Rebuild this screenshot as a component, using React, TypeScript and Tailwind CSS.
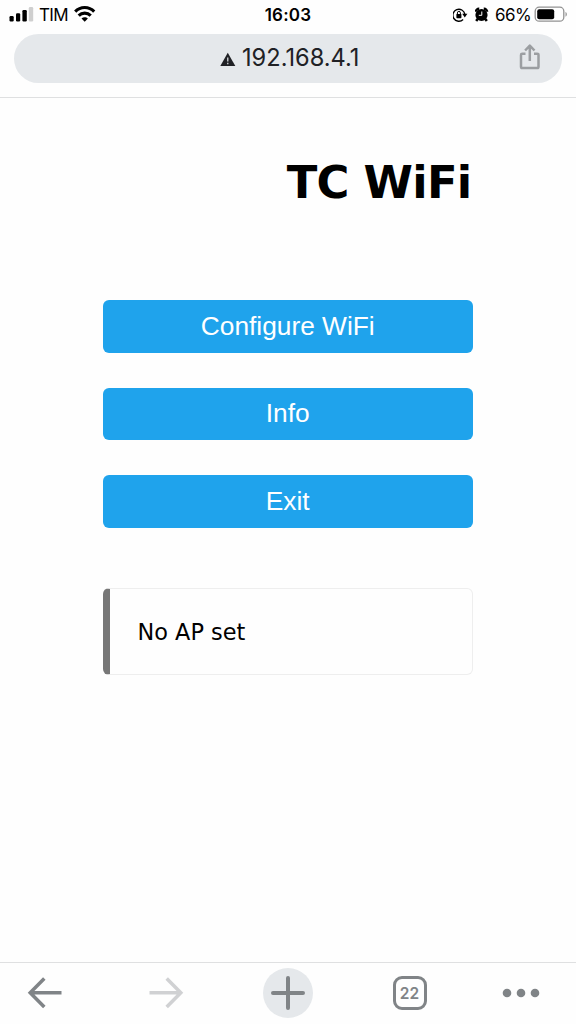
import React from "react";

function StatusBar() {
  return (
    <header className="flex h-[34px] items-start font-['Inter',sans-serif] text-black">
      <div className="flex w-[192px] pl-[9px] pt-[4px]">
        <svg width="25" height="20" viewBox="0 0 25 20" aria-hidden="true">
          <rect x="0.5" y="12" width="4.2" height="5.5" rx="1.2" />
          <rect x="7" y="9.2" width="4.2" height="8.3" rx="1.2" />
          <rect x="13.4" y="6" width="4.4" height="11.5" rx="1.2" />
          <rect x="19.8" y="3" width="4.4" height="14.5" rx="1.2" fill="#cfcfcf" />
        </svg>
        <span className="ml-[5px] w-[29px] whitespace-nowrap pt-px text-[17px] leading-5 tracking-[-0.6px]">TIM</span>
        <svg className="ml-[5px]" width="24" height="20" viewBox="0 0 24 20" fill="none" stroke="#000" strokeWidth="3.1" aria-hidden="true">
          <path d="M2.2 7.6C7.4 2.2 16 2.2 21.2 7.6" />
          <path d="M5.7 11.6C9 8.3 14.4 8.3 17.7 11.6" />
          <path d="M8.5 14.6C10.3 12.8 13.1 12.8 14.9 14.6L11.7 17.8Z" fill="#000" stroke="none" />
        </svg>
      </div>
      <div className="flex-1 pt-[5px] text-center text-[17px] font-semibold leading-5 tracking-[0.2px]">16:03</div>
      <div className="flex w-[192px] justify-end pr-[7px] pt-[4px]">
        <svg width="16" height="20" viewBox="0 0 16 20" fill="none" stroke="#000" strokeWidth="1.4" aria-hidden="true">
          <path d="M10.1 15.5A6 6 0 1 1 11.8 10.2" />
          <path d="M9.2 9.8H14.4L11.8 13.4Z" fill="#000" stroke="none" />
          <rect x="3.4" y="10" width="5" height="4.2" rx="0.6" fill="#000" stroke="none" />
          <path d="M4.4 10V8.9a1.5 1.5 0 0 1 3 0v1.1" strokeWidth="1" />
        </svg>
        <svg className="ml-[6px]" width="15" height="20" viewBox="0 0 15 20" aria-hidden="true">
          <circle cx="6.5" cy="11" r="6.1" />
          <path d="M.9 7.8A3 3 0 0 1 4.2 4.8M8.8 4.8A3 3 0 0 1 12.1 7.8M2.6 15L1.2 17M10.4 15L11.8 17" fill="none" stroke="#000" strokeWidth="2.5" />
          <path d="M6.8 7.5V11.3H3.8" fill="none" stroke="#fff" strokeWidth="1" />
        </svg>
        <span className="ml-[5px] w-[37px] whitespace-nowrap pt-px text-[17px] leading-5 tracking-[-0.6px]">66%</span>
        <svg className="ml-[2px]" width="35" height="20" viewBox="0 0 35 20" aria-hidden="true">
          <rect x="1.2" y="3.2" width="28.6" height="14" rx="4" fill="none" stroke="#929292" strokeWidth="1.3" />
          <rect x="3.2" y="5.2" width="17" height="10" rx="2" />
          <path d="M31.5 8v4.7c1.8-.7 1.8-4 0-4.7Z" fill="#929292" />
        </svg>
      </div>
    </header>
  );
}

function AddressBar() {
  return (
    <div className="h-16 border-b border-[#dfe0e1] px-[14px]">
      <div className="flex h-[49px] items-center rounded-full bg-[#e5e8eb]">
        <div className="flex flex-1 items-center pl-[206px]">
          <svg className="mt-[2px]" width="16" height="15" viewBox="0 0 16 15" aria-hidden="true">
            <path d="M7.8.8L15.3 14H.3Z" fill="#202125" />
            <path d="M7.8 5.4v4M7.8 10.7v1.6" stroke="#e5e8eb" strokeWidth="1.2" />
          </svg>
          <span className="-mt-px ml-[6px] whitespace-nowrap font-['Inter',sans-serif] text-[23.6px] leading-7 tracking-[0.02px] text-[#202125]">192.168.4.1</span>
        </div>
        <svg className="-mt-[3px] mr-[21px]" width="22" height="28" viewBox="0 0 22 28" fill="none" stroke="#9b9ea1" strokeWidth="2.5" strokeLinejoin="round" aria-hidden="true">
          <path d="M6.5 10.8H3.2Q2 10.8 2 12V23.7Q2 25 3.2 25H18.2Q19.5 25 19.5 23.7V12Q19.5 10.8 18.2 10.8H15" />
          <path d="M10.8 18V3M6.1 7.5L10.8 2.6L15.5 7.5" />
        </svg>
      </div>
    </div>
  );
}

const actions = ["Configure WiFi", "Info", "Exit"];

function Portal() {
  return (
    <main className="flex-1 pl-[102.5px] pr-[103px] pt-[58px] text-black">
      <h1 className="whitespace-nowrap pr-[1.5px] text-right font-['DejaVu_Sans',sans-serif] text-[44.8px] font-bold leading-[54px] tracking-[-0.7px]">TC WiFi</h1>
      <div className="mt-[90.25px] flex flex-col gap-[35px]">
        {actions.map((label) => (
          <button key={label} className="h-[52.5px] rounded-[6px] bg-[#1fa3ec] pb-[2px] font-['Liberation_Sans',sans-serif] text-[26.3px] leading-[50px] text-white">
            {label}
          </button>
        ))}
      </div>
      <div className="mt-[60px] flex h-[87px] items-center rounded-[6px] border border-l-[7px] border-[#eeeeee] border-l-[#777777] pl-[28px] pt-[4px] font-['DejaVu_Sans',sans-serif] text-[22.4px]">
        No AP set
      </div>
    </main>
  );
}

function BottomBar() {
  return (
    <nav className="grid h-[62px] grid-cols-[90px_152px_92px_151px_71px] border-t border-[#dfe0e1] text-[#808487]">
      <button aria-label="Back" className="flex justify-center pt-[13px]">
        <svg width="36" height="34" viewBox="0 0 36 34" fill="none" stroke="currentColor" strokeWidth="3.5">
          <path d="M34.5 16.7H3M17.3 2.5L3.2 16.7L17.3 31" />
        </svg>
      </button>
      <button aria-label="Forward" className="flex justify-center pt-[13px] text-[#d0d1d3]">
        <svg width="36" height="34" viewBox="0 0 36 34" fill="none" stroke="currentColor" strokeWidth="3.5">
          <path d="M1.5 16.7H33M18.7 2.5L32.8 16.7L18.7 31" />
        </svg>
      </button>
      <div className="flex justify-center pt-[5px]">
        <button aria-label="New tab" className="flex h-[50px] w-[50px] items-center justify-center rounded-full bg-[#e5e8eb]">
          <svg width="34" height="34" viewBox="0 0 34 34" fill="none" stroke="currentColor" strokeWidth="4" strokeLinecap="round">
            <path d="M17 2V32M2 17H32" />
          </svg>
        </button>
      </div>
      <div className="flex justify-center pt-[13px]">
        <button className="flex h-[34px] w-[34px] items-center justify-center rounded-[9px] border-[3px] border-current pt-px font-['Inter',sans-serif] text-[15.5px] font-semibold leading-5">22</button>
      </div>
      <button aria-label="More" className="flex justify-center pt-[25px]">
        <svg width="38" height="10" viewBox="0 0 38 10" fill="currentColor">
          <circle cx="5" cy="5" r="4.3" />
          <circle cx="19" cy="5" r="4.3" />
          <circle cx="33" cy="5" r="4.3" />
        </svg>
      </button>
    </nav>
  );
}

export default function App() {
  return (
    <div className="flex h-[1024px] w-[576px] flex-col overflow-hidden bg-[#fefefe]">
      <StatusBar />
      <AddressBar />
      <Portal />
      <BottomBar />
    </div>
  );
}
